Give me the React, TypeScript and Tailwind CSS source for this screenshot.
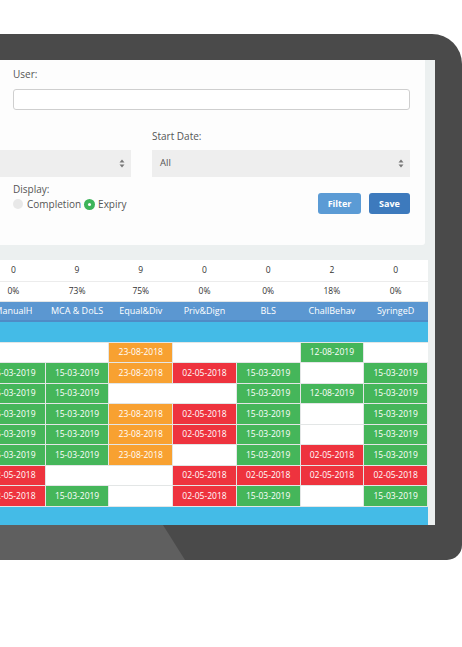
import React from "react";

const cols = ["ManualH", "MCA & DoLS", "Equal&Div", "Priv&Dign", "BLS", "ChallBehav", "SyringeD"];
const counts = ["0", "9", "9", "0", "0", "2", "0"];
const pcts = ["0%", "73%", "75%", "0%", "0%", "18%", "0%"];

const rows: string[][] = [
  ["", "", "o", "", "", "g2", ""],
  ["g", "g", "o", "r", "g", "", "g"],
  ["g", "g", "", "", "g", "g2", "g"],
  ["g", "g", "o", "r", "g", "", "g"],
  ["g", "g", "o", "r", "g", "", "g"],
  ["g", "g", "o", "", "g", "r", "g"],
  ["r", "", "", "r", "r", "r", "r"],
  ["r", "g", "", "r", "g", "", "g"],
];

function Cell({ k }: { k: string }) {
  if (k === "g")
    return <td className="bg-[#45b65a] text-white border border-[#e3e6e6] text-center">15-03-2019</td>;
  if (k === "g2")
    return <td className="bg-[#45b65a] text-white border border-[#e3e6e6] text-center">12-08-2019</td>;
  if (k === "o")
    return <td className="bg-[#f8a131] text-white border border-[#e3e6e6] text-center">23-08-2018</td>;
  if (k === "r")
    return <td className="bg-[#ee333e] text-white border border-[#e3e6e6] text-center">02-05-2018</td>;
  return <td className="bg-white border-y border-[#e3e6e6]"></td>;
}

function Caret() {
  return (
    <svg width="6" height="9" viewBox="0 0 6 9">
      <path d="M3 0.5 L5.5 3.5 L0.5 3.5 Z" fill="#777" />
      <path d="M3 8.5 L5.5 5.5 L0.5 5.5 Z" fill="#777" />
    </svg>
  );
}

export default function App() {
  return (
    <div className="w-[462px] h-[647px] bg-white overflow-hidden font-['Open_Sans',sans-serif]">
      <div className="mt-[34px] h-[526px] bg-[#4a4a4a] rounded-tr-[30px] rounded-br-[15px] overflow-hidden flex flex-col">
        <div className="pt-[26px] pr-[27px]">
          <div className="h-[465px] bg-[#ecf0f0] overflow-hidden flex flex-col">
            {/* Filter panel */}
            <div className="w-[425px] h-[185px] bg-[#fdfdfd] rounded-br-[3px] pl-[13px] pr-[15px] pt-[7px] text-[10px] text-[#555]">
              <div className="leading-[14px]">User:</div>
              <div className="mt-[8px] h-[21px] border border-[#cfcfcf] rounded-[3px] bg-white"></div>
              <div className="mt-[19px] flex gap-[21px]">
                <div className="w-[131px] ml-[-13px] shrink-0 flex flex-col">
                  <div className="h-[14px]"></div>
                  <div className="mt-[7px] h-[27px] bg-[#eeeeee] flex items-center justify-end pr-[6px]">
                    <Caret />
                  </div>
                </div>
                <div className="flex-1 flex flex-col">
                  <div className="leading-[14px]">Start Date:</div>
                  <div className="mt-[7px] h-[27px] bg-[#eeeeee] flex items-center justify-between pl-[8px] pr-[6px] text-[9.5px] text-[#555]">
                    <span>All</span>
                    <Caret />
                  </div>
                </div>
              </div>
              <div className="mt-[5px] flex justify-between">
                <div className="flex flex-col">
                  <div className="leading-[14px]">Display:</div>
                  <div className="mt-[1px] flex items-center leading-[14px]">
                    <span className="w-[10px] h-[10px] rounded-full bg-[#e8e8e8]"></span>
                    <span className="ml-[4px]">Completion</span>
                    <span className="ml-[3px] w-[11px] h-[11px] rounded-full bg-[#3db45a] flex items-center justify-center">
                      <span className="w-[3px] h-[3px] rounded-full bg-white"></span>
                    </span>
                    <span className="ml-[3px]">Expiry</span>
                  </div>
                </div>
                <div className="flex gap-[8px] mt-[11px]">
                  <div className="w-[43px] h-[21px] rounded-[3px] bg-[#5b9bd5] text-white font-bold text-[9px] flex items-center justify-center">Filter</div>
                  <div className="w-[41px] h-[21px] rounded-[3px] bg-[#3d7abd] text-white font-bold text-[9px] flex items-center justify-center">Save</div>
                </div>
              </div>
            </div>

            {/* Table */}
            <div className="mt-[15px] w-[428px] overflow-hidden">
              <table className="ml-[-19px] w-[447px] table-fixed border-collapse text-[8.5px] leading-none">
                <tbody>
                  <tr className="h-[21px] bg-white text-[#333]">
                    {counts.map((c, i) => (
                      <td key={i} className="text-center border-b border-[#ececec]">{c}</td>
                    ))}
                  </tr>
                  <tr className="h-[20px] bg-white text-[#333]">
                    {pcts.map((c, i) => (
                      <td key={i} className="text-center border-b border-[#e3e6e6]">{c}</td>
                    ))}
                  </tr>
                  <tr className="h-[20px] bg-[#5b97d1] text-white">
                    {cols.map((c, i) => (
                      <td key={i} className="text-center font-medium text-[9px] border-b-2 border-[#4f8cc6]">{c}</td>
                    ))}
                  </tr>
                  <tr className="h-[21px] bg-[#44bbe7]">
                    <td colSpan={7}></td>
                  </tr>
                  {rows.map((r, ri) => (
                    <tr key={ri} className="h-[20.5px]">
                      {r.map((k, ci) => (
                        <Cell key={ci} k={k} />
                      ))}
                    </tr>
                  ))}
                  <tr className="h-[19px] bg-[#44bbe7]">
                    <td colSpan={7}></td>
                  </tr>
                </tbody>
              </table>
            </div>
          </div>
        </div>
        <div className="flex-1">
          <svg width="462" height="35" viewBox="0 0 462 35" className="block">
            <polygon points="0,0 163,0 185,35 0,35" fill="#5f5f5f" />
          </svg>
        </div>
      </div>
    </div>
  );
}
